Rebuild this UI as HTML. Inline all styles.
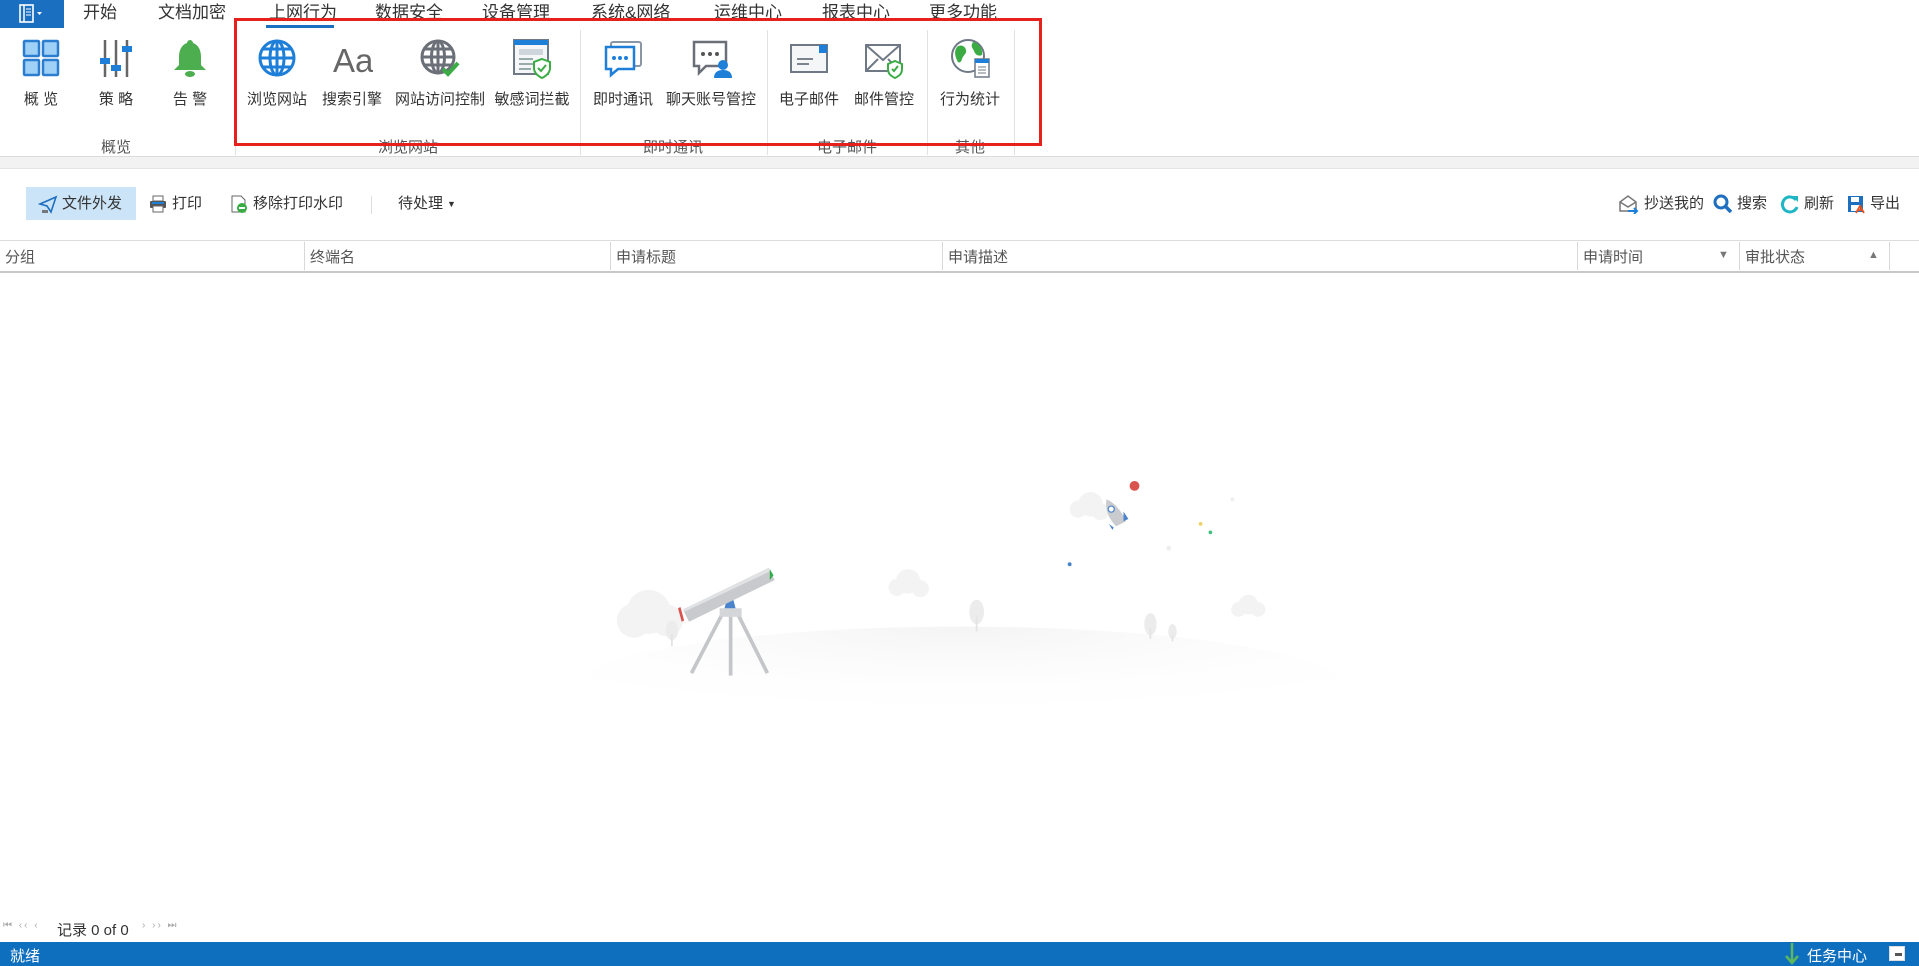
<!DOCTYPE html>
<html><head><meta charset="utf-8">
<style>
*{margin:0;padding:0;box-sizing:border-box}
body{width:1919px;height:966px;overflow:hidden;background:#fff;font-family:"Liberation Sans","Noto Sans CJK SC",sans-serif;color:#333;position:relative}
.a{position:absolute;white-space:nowrap}
.tab{position:absolute;top:1px;font-size:17px;color:#333;line-height:24px}
.btn{position:absolute;top:37px;width:100px;margin-left:-50px;text-align:center}
.btn svg{display:block;margin:0 auto;width:42px;height:42px}
.btn span{display:block;margin-top:12px;font-size:15px;color:#333;line-height:18px}
.gl{position:absolute;top:136px;font-size:15px;color:#555;transform:translateX(-50%)}
.sep{position:absolute;top:30px;width:1px;height:125px;background:#e2e2e2}
.th{position:absolute;top:246px;font-size:15px;color:#555}
.cs{position:absolute;top:242px;width:1px;height:28px;background:#d8d8d8}
.tb{position:absolute;top:193px;font-size:15px;color:#333;line-height:22px;display:flex;align-items:center;gap:4px}
</style></head><body>
<div class="a" style="left:0;top:0;width:64px;height:28px;background:#1a6fc0">
<svg width="64" height="28"><rect x="20" y="5" width="13" height="17" fill="none" stroke="#fff" stroke-width="1.6"/><line x1="24" y1="5" x2="24" y2="22" stroke="#fff" stroke-width="1.5"/><line x1="26" y1="9" x2="31" y2="9" stroke="#fff"/><line x1="26" y1="12" x2="31" y2="12" stroke="#fff"/><line x1="26" y1="15" x2="31" y2="15" stroke="#fff"/><path d="M37 12 l2.5 3 l2.5 -3z" fill="#fff"/></svg></div>
<div class="tab" style="left:83px">开始</div>
<div class="tab" style="left:158px">文档加密</div>
<div class="tab" style="left:269px">上网行为</div>
<div class="tab" style="left:375px">数据安全</div>
<div class="tab" style="left:482px">设备管理</div>
<div class="tab" style="left:591px">系统&amp;网络</div>
<div class="tab" style="left:714px">运维中心</div>
<div class="tab" style="left:822px">报表中心</div>
<div class="tab" style="left:929px">更多功能</div>
<div class="a" style="left:266px;top:25px;width:68px;height:3px;background:#1a6fc0"></div>

<div class="a" style="left:0;top:156px;width:1919px;height:1px;background:#dcdcdc"></div>
<div class="a" style="left:0;top:157px;width:1919px;height:11px;background:#f2f2f2"></div>
<div class="a" style="left:0;top:168px;width:1919px;height:1px;background:#e4e4e4"></div>
<div class="sep" style="left:235px"></div><div class="sep" style="left:580px"></div><div class="sep" style="left:767px"></div><div class="sep" style="left:927px"></div><div class="sep" style="left:1014px"></div>

<div class="btn" style="left:41px"><svg viewBox="0 0 42 42"><g fill="#9fd0f6" stroke="#2b7dd0" stroke-width="2.5"><rect x="4" y="4" width="15" height="15" rx="1"/><rect x="23" y="4" width="15" height="15" rx="1"/><rect x="4" y="23" width="15" height="15" rx="1"/><rect x="23" y="23" width="15" height="15" rx="1"/></g></svg><span>概 览</span></div>
<div class="btn" style="left:116px"><svg viewBox="0 0 42 42"><g stroke="#666" stroke-width="2.5"><line x1="10" y1="3" x2="10" y2="40"/><line x1="21" y1="3" x2="21" y2="40"/><line x1="32" y1="3" x2="32" y2="40"/></g><g fill="#1e7fd9"><rect x="5" y="21" width="10" height="6"/><rect x="16" y="28" width="10" height="6"/><rect x="27" y="9" width="10" height="6"/></g></svg><span>策 略</span></div>
<div class="btn" style="left:190px"><svg viewBox="0 0 42 42"><path d="M21 3c-2 0-3 2-3 3c-6 2-8 8-8 14v8l-5 5h32l-5-5v-8c0-6-2-12-8-14c0-1-1-3-3-3z" fill="#4cae4f"/><ellipse cx="21" cy="37" rx="5" ry="3" fill="#4cae4f"/></svg><span>告 警</span></div>

<div class="btn" style="left:277px"><svg viewBox="0 0 42 42"><g fill="none" stroke="#1e7fd9" stroke-width="3"><circle cx="21" cy="21" r="17"/><ellipse cx="21" cy="21" rx="7" ry="17"/><line x1="4" y1="21" x2="38" y2="21"/><line x1="21" y1="4" x2="21" y2="38"/><path d="M7 12h28M7 30h28"/></g></svg><span>浏览网站</span></div>
<div class="btn" style="left:352px"><svg viewBox="0 0 42 42"><text x="2" y="35" font-family="Liberation Sans" font-size="33" fill="#666">Aa</text></svg><span>搜索引擎</span></div>
<div class="btn" style="left:440px"><svg viewBox="0 0 42 42"><g fill="none" stroke="#6b6f78" stroke-width="3"><circle cx="19" cy="20" r="16"/><ellipse cx="19" cy="20" rx="6.5" ry="16"/><line x1="3" y1="20" x2="35" y2="20"/><line x1="19" y1="4" x2="19" y2="36"/><path d="M6 12h26M6 28h26"/></g><path d="M24 32l5 5l10-11" fill="none" stroke="#3aac43" stroke-width="4"/></svg><span>网站访问控制</span></div>
<div class="btn" style="left:532px"><svg viewBox="0 0 42 42"><rect x="3" y="3" width="34" height="34" fill="#f4f6f8" stroke="#6f7885" stroke-width="2"/><rect x="3" y="3" width="34" height="5" fill="#1e7fd9"/><rect x="8" y="12" width="24" height="6" fill="#cfd5dc"/><path d="M8 22h14M8 27h14M8 32h12" stroke="#9aa" stroke-width="2"/><path d="M31 22l8 3v6c0 5-4 8-8 10c-4-2-8-5-8-10v-6z" fill="#fff" stroke="#3aac43" stroke-width="2"/><path d="M27 31l3 3l5-6" fill="none" stroke="#3aac43" stroke-width="2"/></svg><span>敏感词拦截</span></div>

<div class="btn" style="left:623px"><svg viewBox="0 0 42 42"><rect x="9" y="5" width="30" height="24" rx="2" fill="#fff" stroke="#8a96a6" stroke-width="2"/><path d="M4 10h28v22h-16l-7 6v-6h-5z" fill="#fff" stroke="#1e7fd9" stroke-width="2.5"/><g fill="#1e7fd9"><circle cx="12" cy="21" r="2"/><circle cx="18" cy="21" r="2"/><circle cx="24" cy="21" r="2"/></g></svg><span>即时通讯</span></div>
<div class="btn" style="left:711px"><svg viewBox="0 0 42 42"><path d="M4 5h32v24h-20l-7 7v-7h-5z" fill="#fff" stroke="#6b6f78" stroke-width="2.5"/><g fill="#555"><circle cx="13" cy="17" r="2"/><circle cx="20" cy="17" r="2"/><circle cx="27" cy="17" r="2"/></g><circle cx="33" cy="28" r="5" fill="#1e7fd9"/><path d="M24 41c0-6 4-8 9-8s9 2 9 8z" fill="#1e7fd9"/></svg><span>聊天账号管控</span></div>

<div class="btn" style="left:809px"><svg viewBox="0 0 42 42"><rect x="3" y="8" width="36" height="27" fill="#f4f6f8" stroke="#6f7885" stroke-width="2"/><rect x="31" y="8" width="8" height="8" fill="#1e7fd9"/><path d="M9 22h16M9 27h12" stroke="#7a838e" stroke-width="2"/></svg><span>电子邮件</span></div>
<div class="btn" style="left:884px"><svg viewBox="0 0 42 42"><rect x="3" y="8" width="34" height="26" fill="#fff" stroke="#6f7885" stroke-width="2"/><path d="M3 8l17 15l17-15M3 34l12-12M37 34l-12-12" fill="none" stroke="#6f7885" stroke-width="2"/><path d="M32 24l7 3v5c0 5-3 7-7 9c-4-2-7-4-7-9v-5z" fill="#fff" stroke="#3aac43" stroke-width="2"/><path d="M29 32l2 2l4-5" fill="none" stroke="#3aac43" stroke-width="2"/></svg><span>邮件管控</span></div>
<div class="btn" style="left:970px"><svg viewBox="0 0 42 42"><circle cx="19" cy="19" r="16" fill="#fff" stroke="#6f7885" stroke-width="2"/><path d="M8 10c4-3 8-1 9 3c1 4-3 5-4 9c-1 4-4 5-5 1c-2-4-3-9 0-13zM24 5c6 1 10 7 9 13c-4 2-7-1-8-4c-1-3-4-4-1-9z" fill="#3aac43"/><rect x="26" y="22" width="14" height="18" fill="#fff" stroke="#6f7885" stroke-width="1.5"/><rect x="26" y="22" width="14" height="4" fill="#1e7fd9"/><path d="M29 30h8M29 33h8M29 36h8" stroke="#6f7885"/></svg><span>行为统计</span></div>

<div class="gl" style="left:116px">概览</div>
<div class="gl" style="left:408px">浏览网站</div>
<div class="gl" style="left:673px">即时通讯</div>
<div class="gl" style="left:847px">电子邮件</div>
<div class="gl" style="left:970px">其他</div>
<div class="a" style="left:234px;top:18px;width:808px;height:128px;border:3px solid #e8201c"></div>

<div class="a" style="left:26px;top:187px;width:110px;height:33px;background:#cce4f7"></div>
<div class="tb" style="left:38px"><svg width="20" height="20"><path d="M2 10l16-7l-5 15l-4-6z" fill="none" stroke="#1e6fc0" stroke-width="1.6"/><path d="M4 16h6v3h-6z" fill="#777"/></svg>文件外发</div>
<div class="tb" style="left:148px"><svg width="20" height="20"><rect x="5" y="2" width="10" height="5" fill="#fff" stroke="#666"/><rect x="2" y="7" width="16" height="7" rx="1" fill="#555"/><rect x="5" y="12" width="10" height="6" fill="#fff" stroke="#666"/><rect x="4" y="8" width="12" height="2" fill="#1e7fd9"/></svg>打印</div>
<div class="tb" style="left:229px"><svg width="20" height="20"><path d="M3 2h9l4 4v12h-13z" fill="#fff" stroke="#666"/><circle cx="13" cy="14" r="5" fill="#3aac43"/><path d="M10 14h6" stroke="#fff" stroke-width="2"/></svg>移除打印水印</div>
<div class="a" style="left:371px;top:196px;width:1px;height:18px;background:#ddd"></div>
<div class="tb" style="left:398px">待处理<span style="font-size:9px">▼</span></div>
<div class="tb" style="left:1618px"><svg width="22" height="20"><path d="M2 8l8-6l8 6v9h-16z" fill="none" stroke="#777" stroke-width="1.5"/><path d="M2 8l8 5l8-5" fill="none" stroke="#777" stroke-width="1.5"/><path d="M10 17h9M16 14l3 3l-3 3" fill="none" stroke="#1e7fd9" stroke-width="2"/></svg>抄送我的</div>
<div class="tb" style="left:1713px"><svg width="20" height="20"><circle cx="8" cy="8" r="6" fill="none" stroke="#1e6fc0" stroke-width="3"/><path d="M12 12l6 6" stroke="#1e6fc0" stroke-width="3.5"/></svg>搜索</div>
<div class="tb" style="left:1780px"><svg width="20" height="20"><path d="M16 6a7.5 7.5 0 1 0 1 7" fill="none" stroke="#1fb5c5" stroke-width="3"/><path d="M12 2h6v6z" fill="#1fb5c5"/></svg>刷新</div>
<div class="tb" style="left:1846px"><svg width="20" height="20"><rect x="2" y="2" width="15" height="16" fill="#1e6fc0"/><rect x="5" y="3" width="8" height="5" fill="#fff"/><rect x="5" y="11" width="9" height="6" fill="#fff"/><path d="M10 19l4-7l4 7M11 16h6" fill="none" stroke="#e8501c" stroke-width="1.8"/></svg>导出</div>

<div class="a" style="left:0;top:240px;width:1919px;height:1px;background:#dcdcdc"></div>
<div class="a" style="left:0;top:271px;width:1919px;height:2px;background:#c8c8c8"></div>
<div class="th" style="left:5px">分组</div>
<div class="cs" style="left:304px"></div><div class="th" style="left:310px">终端名</div>
<div class="cs" style="left:610px"></div><div class="th" style="left:616px">申请标题</div>
<div class="cs" style="left:942px"></div><div class="th" style="left:948px">申请描述</div>
<div class="cs" style="left:1577px"></div><div class="th" style="left:1583px">申请时间</div>
<div class="th" style="left:1718px;font-size:11px;top:249px;color:#777">▼</div>
<div class="cs" style="left:1739px"></div><div class="th" style="left:1745px">审批状态</div>
<div class="th" style="left:1868px;font-size:11px;top:249px;color:#777">▲</div>
<div class="cs" style="left:1889px"></div>

<svg class="a" style="left:0;top:0" width="1919" height="966" viewBox="0 0 1568 789.3">
<defs><radialGradient id="g" cx="0.5" cy="0" r="0.8"><stop offset="0" stop-color="#f4f4f4"/><stop offset="1" stop-color="#fff" stop-opacity="0"/></radialGradient></defs>
<ellipse cx="785" cy="560" rx="310" ry="48" fill="url(#g)"/>
<g fill="#f3f3f3"><circle cx="530" cy="500" r="18"/><circle cx="518" cy="507" r="14"/><circle cx="545" cy="507" r="13"/>
<circle cx="742" cy="475" r="10"/><circle cx="733" cy="480" r="7"/><circle cx="752" cy="481" r="7"/>
<circle cx="891" cy="412" r="10"/><circle cx="881" cy="416" r="7"/><circle cx="899" cy="418" r="7"/>
<circle cx="1020" cy="494" r="8"/><circle cx="1012" cy="498" r="6"/><circle cx="1028" cy="498" r="6"/></g>
<g fill="#ececec"><ellipse cx="549" cy="515" rx="5" ry="8"/><ellipse cx="798" cy="500" rx="6" ry="10"/><ellipse cx="940" cy="510" rx="5" ry="9"/><ellipse cx="958" cy="516" rx="3.5" ry="6"/></g>
<g stroke="#e4e4e4" stroke-width="1.5"><line x1="549" y1="518" x2="549" y2="528"/><line x1="798" y1="503" x2="798" y2="516"/><line x1="940" y1="513" x2="940" y2="522"/><line x1="958" y1="519" x2="958" y2="524"/></g>
<g stroke="#c4c6c9" stroke-width="3"><line x1="590" y1="502" x2="565" y2="550"/><line x1="597" y1="502" x2="597" y2="552"/><line x1="603" y1="502" x2="627" y2="550"/></g>
<rect x="588" y="497" width="18" height="7" fill="#d4d6d9"/>
<path d="M592 497l2-8h5l2 8z" fill="#4a84cc"/>
<path d="M558 498l70-34l5 10l-70 34z" fill="#c8cacd"/><path d="M558 498l70-34l1 3l-70 33z" fill="#e0e2e4"/>
<path d="M556 496l3 11l-2 1l-3-11z" fill="#d9534f"/>
<path d="M629 465l3 5l-3 4z" fill="#2fae4a"/>
<circle cx="927" cy="397" r="4" fill="#d9534f"/>
<path d="M904 408c6 2 13 10 16 18l-8 4c-6-6-9-13-8-22z" fill="#c9cbce"/><circle cx="908" cy="416" r="2.5" fill="#fff" stroke="#4a84cc"/>
<path d="M918 418l4 6l-4 2zM906 428l4 3l-1 2z" fill="#4a84cc"/>
<circle cx="874" cy="461" r="1.6" fill="#4a84cc"/><circle cx="955" cy="448" r="2" fill="#eee"/><circle cx="981" cy="428" r="1.5" fill="#f0d060"/><circle cx="989" cy="435" r="1.5" fill="#40c080"/><circle cx="1007" cy="408" r="1.6" fill="#eee"/>
</svg>

<div class="a" style="left:3px;top:920px;font-size:10px;color:#aaa;letter-spacing:2px">⏮ ‹‹ ‹</div>
<div class="a" style="left:57px;top:919px;font-size:15px;color:#333">记录 0 of 0</div>
<div class="a" style="left:142px;top:920px;font-size:10px;color:#aaa;letter-spacing:2px">› ›› ⏭</div>

<div class="a" style="left:0;top:942px;width:1919px;height:24px;background:#0f6fbf"></div>
<div class="a" style="left:10px;top:945px;font-size:15px;color:#fff">就绪</div>
<svg class="a" style="left:1782px;top:942px" width="20" height="24"><path d="M10 1v20M4 14l6 7l6-7" fill="none" stroke="#5cb85c" stroke-width="2.5"/></svg>
<div class="a" style="left:1807px;top:945px;font-size:15px;color:#fff">任务中心</div>
<div class="a" style="left:1889px;top:946px;width:16px;height:15px;background:#fff;border:1px solid #ddd"><div style="margin:6px 2px 0 5px;height:3px;background:#555"></div></div>
</body></html>
